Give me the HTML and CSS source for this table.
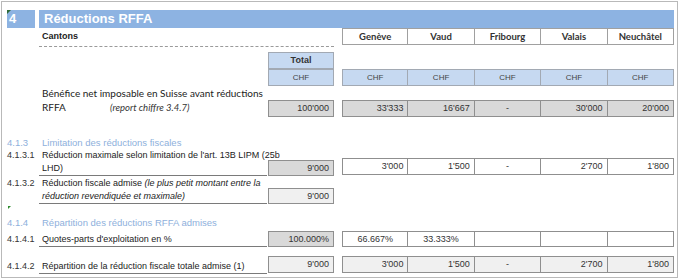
FILE: index.html
```html
<!DOCTYPE html>
<html lang="fr">
<head>
<meta charset="utf-8">
<title>Réductions RFFA</title>
<link rel="stylesheet" href="styles.css">
</head>
<body>
<div class="frame">
  <div class="row title-row">
    <div class="num-cell">4</div>
    <div class="title-cell">Réductions RFFA</div>
  </div>

  <div class="row head-row">
    <div class="cantons">Cantons</div>
    <div class="hcell c5">Genève</div>
    <div class="hcell c6">Vaud</div>
    <div class="hcell c7">Fribourg</div>
    <div class="hcell c8">Valais</div>
    <div class="hcell c9">Neuchâtel</div>
  </div>

  <div class="row total-row">
    <div class="cell blue bold center c3">Total</div>
  </div>

  <div class="row chf-row">
    <div class="cell blue center c3 chf">CHF</div>
    <div class="cell blue center c5 chf">CHF</div>
    <div class="cell blue center c6 chf">CHF</div>
    <div class="cell blue center c7 chf">CHF</div>
    <div class="cell blue center c8 chf">CHF</div>
    <div class="cell blue center c9 chf">CHF</div>
  </div>

  <div class="row benefit-row">
    <div class="benefit-label">
      <div>Bénéfice net imposable en Suisse avant réductions</div>
      <div><span class="rffa">RFFA</span><em>(report chiffre 3.4.7)</em></div>
    </div>
    <div class="cell gray c3">100'000</div>
    <div class="cell gray c5">33'333</div>
    <div class="cell gray c6">16'667</div>
    <div class="cell gray center c7">-</div>
    <div class="cell gray c8">30'000</div>
    <div class="cell gray c9">20'000</div>
  </div>

  <div class="row section-row s413">
    <div class="num sec">4.1.3</div>
    <div class="label sec">Limitation des réductions fiscales</div>
  </div>

  <div class="row item-row r4131">
    <div class="num">4.1.3.1</div>
    <div class="label ul">Réduction maximale selon limitation de l'art. 13B LIPM (25b<br>LHD)</div>
    <div class="cell gray c3">9'000</div>
    <div class="cell white c5">3'000</div>
    <div class="cell white c6">1'500</div>
    <div class="cell white center c7">-</div>
    <div class="cell white c8">2'700</div>
    <div class="cell white c9">1'800</div>
  </div>

  <div class="row item-row r4132">
    <div class="num">4.1.3.2</div>
    <div class="label ul">Réduction fiscale admise <em>(le plus petit montant entre la<br>réduction revendiquée et maximale)</em></div>
    <div class="cell light c3">9'000</div>
  </div>

  <div class="marker-row"><span class="marker"></span></div>

  <div class="row section-row s414">
    <div class="num sec">4.1.4</div>
    <div class="label sec">Répartition des réductions RFFA admises</div>
  </div>

  <div class="row single-row r4141">
    <div class="num">4.1.4.1</div>
    <div class="label ul">Quotes-parts d'exploitation en %</div>
    <div class="cell gray c3">100.000%</div>
    <div class="cell white center c5">66.667%</div>
    <div class="cell white center c6">33.333%</div>
    <div class="cell white c7"></div>
    <div class="cell white c8"></div>
    <div class="cell white c9"></div>
  </div>

  <div class="row single-row r4142">
    <div class="num">4.1.4.2</div>
    <div class="label ul">Répartition de la réduction fiscale totale admise (1)</div>
    <div class="cell light c3">9'000</div>
    <div class="cell light c5">3'000</div>
    <div class="cell light c6">1'500</div>
    <div class="cell light center c7">-</div>
    <div class="cell light c8">2'700</div>
    <div class="cell light c9">1'800</div>
  </div>
</div>
</body>
</html>
```

FILE: styles.css
```css
* { box-sizing: border-box; }

html, body {
  margin: 0;
  padding: 0;
  background: #ffffff;
}

body {
  font-family: "Liberation Sans", Arial, sans-serif;
  font-size: 9px;
  color: #222;
}

.frame {
  margin: 1px 0 0 1px;
  width: 677px;
  height: 277px;
  border: 1px solid #b9b9b9;
  padding: 8px 0 0 5px;
  overflow: hidden;
  background: #fff;
}

.row {
  display: grid;
  grid-template-columns: 32px 229px 66px 8px repeat(5, 1fr);
  width: 667px;
}

.c3 { grid-column: 3; }
.c5 { grid-column: 5; }
.c6 { grid-column: 6; }
.c7 { grid-column: 7; }
.c8 { grid-column: 8; }
.c9 { grid-column: 9; }

/* Title */
.title-row { height: 18px; }
.num-cell {
  grid-column: 1;
  background: #8db3e2;
  color: #fff;
  font-weight: bold;
  font-size: 13px;
  line-height: 18px;
  padding-left: 2px;
  margin-right: 4px;
  position: relative;
}
.num-cell::before {
  content: "";
  position: absolute;
  left: 0;
  top: 0;
  border-top: 4px solid #2f6b3a;
  border-right: 4px solid transparent;
}
.title-cell {
  grid-column: 2 / 10;
  background: #8db3e2;
  color: #fff;
  font-weight: bold;
  font-size: 13px;
  line-height: 18px;
  padding-left: 5px;
}

/* Header */
.head-row { height: 19px; align-items: start; }
.cantons {
  grid-column: 2 / 4;
  height: 19px;
  font-weight: bold;
  font-size: 9px;
  line-height: 17px;
  padding-left: 3px;
  border-bottom: 1px dashed #9a9a9a;
}
.hcell {
  height: 17px;
  line-height: 15px;
  text-align: center;
  font-family: "Lato", "Liberation Sans", sans-serif;
  font-weight: bold;
  font-size: 9.5px;
  color: #333;
  border: 1px solid #a0a0a0;
  border-left-width: 0;
  background: #fff;
}
.hcell.c5 { border-left-width: 1px; }

/* Generic cells */
.cell {
  height: 17px;
  line-height: 15px;
  border: 1px solid #8f8f8f;
  padding: 0 4px;
  text-align: right;
  font-size: 9px;
  color: #333;
}
.cell.c6, .cell.c7, .cell.c8, .cell.c9 { border-left-width: 0; }
.center { text-align: center; }
.bold { font-weight: bold; }
.blue { background: #c6d9f1; border-color: #a2a9b3; }
.gray { background: #d9d9d9; }
.white { background: #fff; }
.light { background: #f0f0f0; }
.chf { font-size: 8px; color: #444; }

.total-row { margin-top: 5px; height: 17px; }
.chf-row { height: 17px; }

.benefit-row { height: 28px; align-items: end; }
.benefit-label {
  grid-column: 2;
  font-family: "Lato", "Liberation Sans", sans-serif;
  font-size: 10px;
  line-height: 14px;
  padding-left: 3px;
  padding-bottom: 2px;
  color: #222;
  white-space: nowrap;
}
.benefit-label em { font-style: italic; color: #333; font-size: 9.5px; }
.rffa { display: inline-block; width: 68px; }

/* Sections */
.section-row { height: 13px; line-height: 13px; }
.s413 { margin-top: 22px; }
.s414 { margin-top: 4px; }

.num {
  grid-column: 1;
  font-size: 9px;
  line-height: 13px;
  color: #333;
}
.label {
  grid-column: 2;
  font-size: 9px;
  line-height: 13px;
  padding-left: 3px;
  color: #222;
  white-space: nowrap;
  margin-right: 1px;
}
.section-row .sec { color: #8eb0dc; font-size: 9.5px; }
.label.ul { border-bottom: 1px solid #7a7a7a; }
.label em { font-style: italic; }

.item-row { height: 27px; align-items: end; }
.item-row .num { align-self: start; }
.item-row .cell { height: 16px; line-height: 14px; }
.r4131 { margin-top: 0; }
.r4131 .white { height: 17px; margin-bottom: 1px; }
.r4132 { margin-top: 1px; }

.marker-row { height: 6px; padding-left: 1px; }
.marker {
  display: block;
  width: 0;
  height: 0;
  margin-top: 2px;
  border-top: 3px solid #2e8b2e;
  border-right: 3px solid transparent;
}

.single-row { height: 17px; align-items: end; }
.r4141 { margin-top: 2px; height: 16px; }
.r4141 .cell { height: 16px; line-height: 14px; }
.r4141 .num, .r4142 .num { padding-bottom: 1px; }
.r4142 { margin-top: 9px; height: 18px; }
.r4142 .cell { height: 17px; margin-bottom: 1px; }
```
